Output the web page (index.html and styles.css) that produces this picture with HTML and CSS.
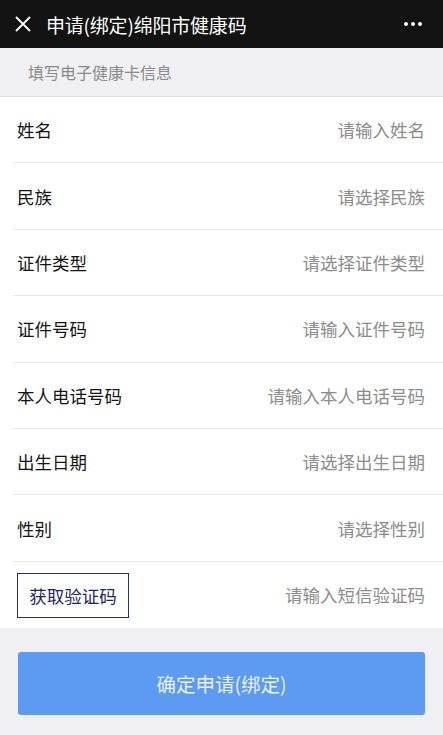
FILE: index.html
```html
<!DOCTYPE html>
<html lang="zh-CN">
<head>
  <meta charset="UTF-8" />
  <meta name="viewport" content="width=device-width, initial-scale=1.0" />
  <title>申请(绑定)绵阳市健康码</title>
  <link rel="stylesheet" href="styles.css">
</head>
<body>
  <div class="topbar">
    <svg class="close" width="16" height="16" viewBox="0 0 16 16">
      <path d="M1 1 L15 15 M15 1 L1 15" stroke="#fff" stroke-width="1.8" fill="none" />
    </svg>
    <span class="title">申请(绑定)绵阳市健康码</span>
    <span class="more"><i></i><i></i><i></i></span>
  </div>

  <div class="section-title">填写电子健康卡信息</div>

  <div class="form">
    <div class="row"><span class="label">姓名</span><span class="hint">请输入姓名</span></div>
    <div class="row"><span class="label">民族</span><span class="hint">请选择民族</span></div>
    <div class="row"><span class="label">证件类型</span><span class="hint">请选择证件类型</span></div>
    <div class="row"><span class="label">证件号码</span><span class="hint">请输入证件号码</span></div>
    <div class="row"><span class="label">本人电话号码</span><span class="hint">请输入本人电话号码</span></div>
    <div class="row"><span class="label">出生日期</span><span class="hint">请选择出生日期</span></div>
    <div class="row"><span class="label">性别</span><span class="hint">请选择性别</span></div>
    <div class="row last"><span class="code-btn">获取验证码</span><span class="hint">请输入短信验证码</span></div>
  </div>

  <div class="footer">
    <button class="submit">确定申请(绑定)</button>
  </div>
</body>
</html>
```

FILE: styles.css
```css
body {
  margin: 0;
  font-family: "Noto Sans CJK SC", "Noto Sans", sans-serif;
  background-color: #f0eff4;
  color: #111;
}

.topbar {
  height: 48px;
  background-color: #131313;
  display: flex;
  align-items: center;
  padding: 0 21px 0 15px;
  color: #fff;
}

.close {
  display: block;
  margin-right: 15px;
}

.title {
  font-size: 19px;
  flex: 1;
  letter-spacing: -0.2px;
}

.more {
  display: flex;
  gap: 3px;
}

.more i {
  width: 4px;
  height: 4px;
  border-radius: 50%;
  background-color: #fff;
}

.section-title {
  height: 48px;
  line-height: 48px;
  padding-left: 28px;
  font-size: 16px;
  color: #8a8a8a;
  border-bottom: 1px solid #e2e2e2;
}

.form {
  background-color: #fff;
}

.row {
  height: 66.4px;
  box-sizing: border-box;
  margin-left: 13px;
  padding: 0 18px 0 4px;
  display: flex;
  align-items: center;
  justify-content: space-between;
  border-bottom: 1px solid #e8e8e8;
}

.row.last {
  border-bottom: none;
}

.label {
  font-size: 17.5px;
  color: #141414;
}

.hint {
  font-size: 17.5px;
  color: #8c8c8c;
}

.code-btn {
  font-size: 17.5px;
  color: #1e2668;
  border: 1.5px solid #2a2f6a;
  height: 45px;
  width: 112px;
  box-sizing: border-box;
  display: flex;
  align-items: center;
  justify-content: center;
  margin-top: 1px;
}

.footer {
  padding: 24px 18px 20px 18px;
}

.submit {
  width: 100%;
  height: 63px;
  border: none;
  border-radius: 3px;
  background-color: #5c9bf1;
  color: #eaf2ff;
  font-family: "Noto Sans CJK SC", "Noto Sans", sans-serif;
  font-size: 19.5px;
}
```
